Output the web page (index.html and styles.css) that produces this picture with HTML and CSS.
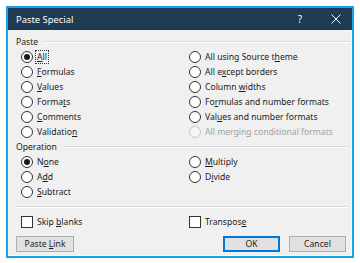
FILE: index.html
```html
<!DOCTYPE html>
<html>
<head>
<meta charset="utf-8">
<link rel="stylesheet" href="styles.css">
</head>
<body>
<div class="dialog">
  <div class="titlebar">
    <span class="title">Paste Special</span>
    <span class="help">?</span>
    <span class="close"><svg width="10" height="10" viewBox="0 0 10 10"><path d="M0.5 0.5 L9.5 9.5 M9.5 0.5 L0.5 9.5" stroke="#ffffff" stroke-width="1" fill="none"/></svg></span>
  </div>
  <div class="content">
    <div class="group-head"><span class="group-label">Paste</span><span class="rule"></span></div>
    <div class="grid">
      <div class="opt"><span class="radio on"></span><span class="focus"><u>A</u>ll</span></div>
      <div class="opt"><span class="radio"></span><span>All using Source t<u>h</u>eme</span></div>
      <div class="opt"><span class="radio"></span><span><u>F</u>ormulas</span></div>
      <div class="opt"><span class="radio"></span><span>All e<u>x</u>cept borders</span></div>
      <div class="opt"><span class="radio"></span><span><u>V</u>alues</span></div>
      <div class="opt"><span class="radio"></span><span>Column <u>w</u>idths</span></div>
      <div class="opt"><span class="radio"></span><span>Forma<u>t</u>s</span></div>
      <div class="opt"><span class="radio"></span><span>Fo<u>r</u>mulas and number formats</span></div>
      <div class="opt"><span class="radio"></span><span><u>C</u>omments</span></div>
      <div class="opt"><span class="radio"></span><span>Val<u>u</u>es and number formats</span></div>
      <div class="opt"><span class="radio"></span><span>Validatio<u>n</u></span></div>
      <div class="opt disabled"><span class="radio"></span><span>All mergin<u>g</u> conditional formats</span></div>
    </div>
    <div class="group-head"><span class="group-label">Operation</span><span class="rule"></span></div>
    <div class="grid">
      <div class="opt"><span class="radio on"></span><span>N<u>o</u>ne</span></div>
      <div class="opt"><span class="radio"></span><span><u>M</u>ultiply</span></div>
      <div class="opt"><span class="radio"></span><span>A<u>d</u>d</span></div>
      <div class="opt"><span class="radio"></span><span>D<u>i</u>vide</span></div>
      <div class="opt"><span class="radio"></span><span><u>S</u>ubtract</span></div>
      <div class="opt"></div>
    </div>
    <div class="group-head"><span class="rule"></span></div>
    <div class="grid">
      <div class="opt"><span class="check"></span><span>Skip <u>b</u>lanks</span></div>
      <div class="opt"><span class="check"></span><span>Transpos<u>e</u></span></div>
    </div>
    <div class="buttons">
      <button class="btn link">Paste <u>L</u>ink</button>
      <span class="spacer"></span>
      <button class="btn default">OK</button>
      <button class="btn">Cancel</button>
    </div>
  </div>
</div>
</body>
</html>
```
FILE: styles.css
```css
html, body {
  margin: 0;
  padding: 0;
  background: #ffffff;
}
body {
  padding: 6px 6px 0 6px;
  font-family: "Noto Sans", "DejaVu Sans", sans-serif;
  font-size: 8.6px;
  color: #1b1b1b;
}
.dialog {
  width: 348px;
  height: 252px;
  box-sizing: border-box;
  border: 2px solid #1aa1e6;
  background: #f0f0f0;
  display: flex;
  flex-direction: column;
}
.titlebar {
  height: 22px;
  background: #1f3b53;
  color: #ffffff;
  display: flex;
  align-items: center;
  padding: 0 11px 0 8px;
}
.title {
  font-size: 9.4px;
  flex: 1;
}
.help {
  font-size: 10px;
  margin-right: 29px;
}
.close {
  display: flex;
  align-items: center;
}
.content {
  flex: 1;
  padding: 4px 2px 0 8px;
  border-right: 1px solid #fafafa;
  border-bottom: 1px solid #fafafa;
  display: flex;
  flex-direction: column;
}
.group-head {
  height: 15px;
  display: flex;
  align-items: center;
}
.group-label {
  margin-right: 6px;
}
.rule {
  flex: 1;
  height: 0;
  border-top: 1px solid #dadada;
  border-bottom: 1px solid #ffffff;
}
.grid {
  display: grid;
  grid-template-columns: 168px 1fr;
  grid-auto-rows: 15px;
  padding-left: 5px;
}
.opt {
  display: flex;
  align-items: center;
  white-space: nowrap;
}
.radio {
  width: 10px;
  height: 10px;
  border: 1px solid #333333;
  border-radius: 50%;
  background: #ffffff;
  margin-right: 4px;
  position: relative;
  flex: none;
}
.radio.on::after {
  content: "";
  position: absolute;
  left: 2px;
  top: 2px;
  width: 6px;
  height: 6px;
  border-radius: 50%;
  background: #1b1b1b;
}
.disabled {
  color: #a2a2a2;
}
.disabled .radio {
  border-color: #c6c6c6;
  background: #f6f6f6;
}
.check {
  width: 10px;
  height: 10px;
  border: 1px solid #333333;
  background: #ffffff;
  margin-right: 4px;
  flex: none;
}
.focus {
  outline: 1px dotted #333333;
  outline-offset: 0;
  padding: 0 1px;
  margin-left: -1px;
}
u {
  text-underline-offset: 1px;
}
.buttons {
  display: flex;
  align-items: center;
  margin-top: 7px;
  padding-right: 3px;
}
.spacer {
  flex: 1;
}
.btn {
  font-family: inherit;
  font-size: 8.6px;
  color: #1b1b1b;
  background: #e1e1e1;
  border: 1px solid #adadad;
  height: 16px;
  width: 57px;
  padding: 0;
  margin: 0;
}
.btn.link {
  width: 58px;
}
.btn.default {
  border: 1px solid #0078d7;
  box-shadow: inset 0 0 0 1px #0078d7;
  margin-right: 9px;
}
```
